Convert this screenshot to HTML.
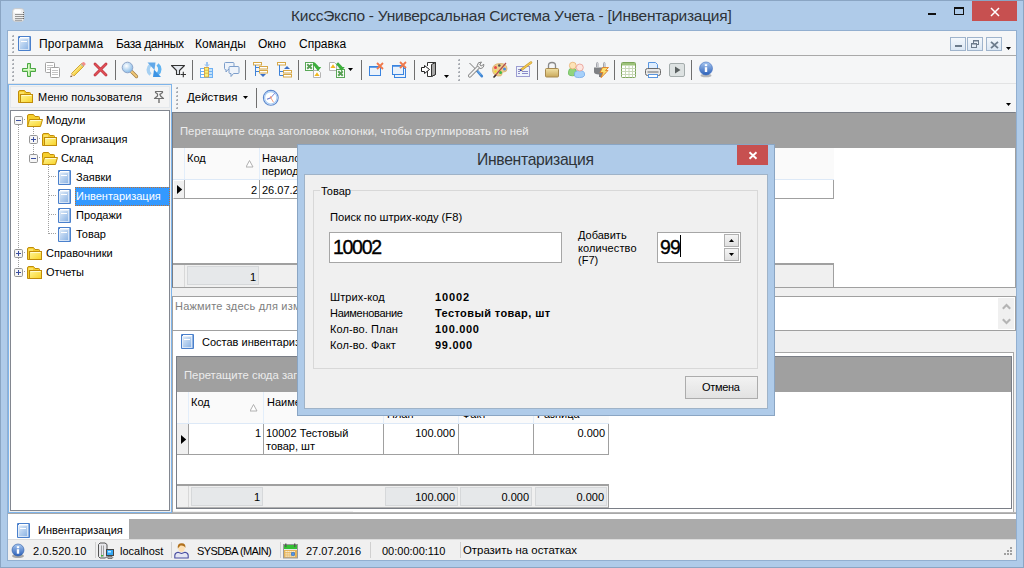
<!DOCTYPE html>
<html><head><meta charset="utf-8">
<style>
*{margin:0;padding:0;box-sizing:border-box}
html,body{width:1024px;height:568px;overflow:hidden;background:#afcbe9;font-family:"Liberation Sans",sans-serif;font-size:11px;color:#000}
.a{position:absolute}
.t{position:absolute;white-space:nowrap;line-height:1}
</style></head><body>
<svg width="0" height="0" style="position:absolute"><defs>
<linearGradient id="gBook" x1="0" y1="0" x2="1" y2="1"><stop offset="0" stop-color="#e3eefa"/><stop offset="1" stop-color="#86b0e3"/></linearGradient>
<linearGradient id="gFold" x1="0" y1="0" x2="1" y2="1"><stop offset="0" stop-color="#fff79a"/><stop offset="1" stop-color="#f8d224"/></linearGradient>
<linearGradient id="gBlueBall" x1="0" y1="0" x2="0" y2="1"><stop offset="0" stop-color="#a9c8f0"/><stop offset="1" stop-color="#2a5fb8"/></linearGradient>
<linearGradient id="gGold" x1="0" y1="0" x2="0" y2="1"><stop offset="0" stop-color="#f1e2a8"/><stop offset="1" stop-color="#c9a85a"/></linearGradient>
<radialGradient id="gMag" cx="0.4" cy="0.35" r="0.7"><stop offset="0" stop-color="#ffffff"/><stop offset="1" stop-color="#7fb6e6"/></radialGradient>
</defs></svg>
<div class="a" style="left:0px;top:0px;width:1024px;height:568px;border:1px solid #8aa5c3"></div>
<svg class="a" style="left:12px;top:8px" width="13" height="14" viewBox="0 0 13 14"><rect x="0.5" y="0.5" width="11.5" height="13" rx="3" fill="#efefef" stroke="#c4c4c4" stroke-width="0.7"/><rect x="2" y="1.5" width="7" height="3.5" rx="1.5" fill="#fff"/><path d="M3 6.5 H11.5 M3 8.5 H11.5 M3 10.5 H11.5 M3 12.3 H10" stroke="#8c8c8c" stroke-width="0.9"/><path d="M11.5 4 V12" stroke="#666" stroke-width="1" stroke-dasharray="1 1"/></svg>
<div class="t" style="left:291px;top:8.28px;font-size:15.5px;letter-spacing:-0.25px;color:#2e3338">КиссЭкспо - Универсальная Система Учета - [Инвентаризация]</div>
<div class="a" style="left:928px;top:13px;width:8px;height:2px;background:#111"></div>
<div class="a" style="left:954px;top:7px;width:10px;height:8px;border:1px solid #111;border-top-width:2px"></div>
<div class="a" style="left:972px;top:1px;width:45px;height:20px;background:#c75050"></div>
<svg class="a" style="left:990px;top:7px" width="10" height="10" viewBox="0 0 10 10"><path d="M1 1 L9 9 M9 1 L1 9" stroke="#fff" stroke-width="1.5"/></svg>
<div class="a" style="left:7px;top:30px;width:1009px;height:26px;background:#f5f6f7;border-bottom:1px solid #a9a9a9"></div>
<svg class="a" style="left:12px;top:35px" width="2" height="20" viewBox="0 0 2 20"><rect x="0" y="0" width="2" height="2" fill="#a9adb3"/><rect x="0" y="0" width="1" height="1" fill="#d4d6da"/><rect x="0" y="4" width="2" height="2" fill="#a9adb3"/><rect x="0" y="4" width="1" height="1" fill="#d4d6da"/><rect x="0" y="8" width="2" height="2" fill="#a9adb3"/><rect x="0" y="8" width="1" height="1" fill="#d4d6da"/><rect x="0" y="12" width="2" height="2" fill="#a9adb3"/><rect x="0" y="12" width="1" height="1" fill="#d4d6da"/><rect x="0" y="16" width="2" height="2" fill="#a9adb3"/><rect x="0" y="16" width="1" height="1" fill="#d4d6da"/></svg>
<svg class="a" style="left:18px;top:36px" width="14" height="16" viewBox="0 0 14 16"><rect x="0" y="0" width="13" height="15" rx="1" fill="#4a80cc"/><rect x="2" y="1" width="9" height="1" fill="#ffffff"/><rect x="1" y="2" width="10" height="12" fill="url(#gBook)"/><rect x="1.5" y="2.5" width="9" height="11" fill="none" stroke="#eef4fb" stroke-opacity="0.7"/><rect x="3" y="5" width="6" height="1" fill="#ffffff"/><rect x="11" y="1" width="1" height="13" fill="#8fb3e2"/></svg>
<div class="t" style="left:39px;top:37.84px;font-size:12px;letter-spacing:0.15px;">Программа</div>
<div class="t" style="left:116px;top:37.84px;font-size:12px;letter-spacing:-0.35px;">База данных</div>
<div class="t" style="left:195px;top:37.84px;font-size:12px;letter-spacing:0px;">Команды</div>
<div class="t" style="left:258px;top:37.84px;font-size:12px;letter-spacing:0px;">Окно</div>
<div class="t" style="left:299px;top:37.84px;font-size:12px;letter-spacing:0px;">Справка</div>
<div class="a" style="left:950px;top:37px;width:16px;height:14px;border:1px solid #9fb4cc;background:linear-gradient(#f4f8fc,#dbe7f4)"></div>
<div class="a" style="left:967px;top:37px;width:16px;height:14px;border:1px solid #9fb4cc;background:linear-gradient(#f4f8fc,#dbe7f4)"></div>
<div class="a" style="left:986px;top:37px;width:16px;height:14px;border:1px solid #9fb4cc;background:linear-gradient(#f4f8fc,#dbe7f4)"></div>
<div class="a" style="left:955px;top:45px;width:7px;height:2px;background:#6c7b8b"></div>
<svg class="a" style="left:971px;top:40px" width="9" height="9" viewBox="0 0 9 9"><rect x="2.5" y="0.5" width="5" height="4" fill="none" stroke="#6c7b8b"/><path d="M3 1 H7" stroke="#6c7b8b"/><rect x="0.5" y="3.5" width="5" height="4" fill="#e6eef7" stroke="#6c7b8b"/><path d="M1 4 H5" stroke="#6c7b8b"/></svg>
<svg class="a" style="left:990px;top:41px" width="9" height="8" viewBox="0 0 9 8"><path d="M1 0.8 L8 7.2 M8 0.8 L1 7.2" stroke="#6c7b8b" stroke-width="1.8"/></svg>
<svg class="a" style="left:1006px;top:47px" width="5" height="4" viewBox="0 0 5 4"><path d="M0 0 L5 0 L2.5 3 Z" fill="#000"/></svg>
<svg class="a" style="left:1006px;top:75px" width="5" height="4" viewBox="0 0 5 4"><path d="M0 0 L5 0 L2.5 3 Z" fill="#000"/></svg>
<div class="a" style="left:7px;top:56px;width:1009px;height:28px;background:#f5f6f7;border-bottom:1px solid #e2e3e4"></div>
<svg class="a" style="left:12px;top:59px" width="2" height="24" viewBox="0 0 2 24"><rect x="0" y="0" width="2" height="2" fill="#a9adb3"/><rect x="0" y="0" width="1" height="1" fill="#d4d6da"/><rect x="0" y="4" width="2" height="2" fill="#a9adb3"/><rect x="0" y="4" width="1" height="1" fill="#d4d6da"/><rect x="0" y="8" width="2" height="2" fill="#a9adb3"/><rect x="0" y="8" width="1" height="1" fill="#d4d6da"/><rect x="0" y="12" width="2" height="2" fill="#a9adb3"/><rect x="0" y="12" width="1" height="1" fill="#d4d6da"/><rect x="0" y="16" width="2" height="2" fill="#a9adb3"/><rect x="0" y="16" width="1" height="1" fill="#d4d6da"/><rect x="0" y="20" width="2" height="2" fill="#a9adb3"/><rect x="0" y="20" width="1" height="1" fill="#d4d6da"/></svg>
<div class="a" style="left:115px;top:60px;width:1px;height:20px;background:#6f6f6f"></div>
<div class="a" style="left:192px;top:60px;width:1px;height:20px;background:#6f6f6f"></div>
<div class="a" style="left:245px;top:60px;width:1px;height:20px;background:#6f6f6f"></div>
<div class="a" style="left:298px;top:60px;width:1px;height:20px;background:#6f6f6f"></div>
<div class="a" style="left:361px;top:60px;width:1px;height:20px;background:#6f6f6f"></div>
<div class="a" style="left:414px;top:60px;width:1px;height:20px;background:#6f6f6f"></div>
<div class="a" style="left:537px;top:60px;width:1px;height:20px;background:#6f6f6f"></div>
<div class="a" style="left:614px;top:60px;width:1px;height:20px;background:#6f6f6f"></div>
<div class="a" style="left:691px;top:60px;width:1px;height:20px;background:#6f6f6f"></div>
<svg class="a" style="left:458px;top:59px" width="2" height="24" viewBox="0 0 2 24"><rect x="0" y="0" width="2" height="2" fill="#a9adb3"/><rect x="0" y="0" width="1" height="1" fill="#d4d6da"/><rect x="0" y="4" width="2" height="2" fill="#a9adb3"/><rect x="0" y="4" width="1" height="1" fill="#d4d6da"/><rect x="0" y="8" width="2" height="2" fill="#a9adb3"/><rect x="0" y="8" width="1" height="1" fill="#d4d6da"/><rect x="0" y="12" width="2" height="2" fill="#a9adb3"/><rect x="0" y="12" width="1" height="1" fill="#d4d6da"/><rect x="0" y="16" width="2" height="2" fill="#a9adb3"/><rect x="0" y="16" width="1" height="1" fill="#d4d6da"/><rect x="0" y="20" width="2" height="2" fill="#a9adb3"/><rect x="0" y="20" width="1" height="1" fill="#d4d6da"/></svg>
<svg class="a" style="left:0;top:0" width="1024" height="568" viewBox="0 0 1024 568">
<!-- plus -->
<path d="M27.5 63.5 H30.5 V68.5 H35.5 V71.5 H30.5 V76.5 H27.5 V71.5 H22.5 V68.5 H27.5 Z" fill="#b4ee9c" stroke="#4aa644" stroke-linejoin="round"/>
<path d="M28.5 65 V75 M24 69.5 H34" stroke="#e4fbd8" stroke-width="0.9" opacity="0.9"/>
<!-- copy -->
<rect x="45.5" y="62.5" width="9" height="10" rx="1" fill="#fff" stroke="#a2a2a2"/>
<path d="M47 65.5 H53 M47 67.5 H53 M47 69.5 H50" stroke="#c4c4c4"/>
<rect x="50.5" y="67.5" width="9" height="10" rx="1" fill="#fff" stroke="#a2a2a2"/>
<path d="M52 70.5 H58 M52 72.5 H58 M52 74.5 H58" stroke="#c4c4c4"/>
<!-- pencil -->
<path d="M71.5 73.5 L81.5 63.5 L84 66 L74 76 Z" fill="#f6d650" stroke="#c8981c" stroke-width="0.8" stroke-linejoin="round"/>
<path d="M72.5 74 L82.2 64.3" stroke="#fff3b0" stroke-width="0.8"/>
<path d="M80.8 64.2 L83.3 66.7" stroke="#b8b8b8" stroke-width="1.2"/>
<path d="M81.5 63.5 L82.8 62.2 Q83.5 61.6 84.2 62.2 L85.3 63.3 Q85.9 64 85.3 64.7 L84 66 Z" fill="#f28c8c"/>
<path d="M70.3 77.2 L71.5 73.5 L74 76 Z" fill="#f2c8a0"/>
<path d="M70.3 77.2 L70.9 75.4 L72.1 76.6 Z" fill="#333"/>
<!-- red X -->
<path d="M95 64 L106 75 M106 64 L95 75" stroke="#b8303a" stroke-width="2.8" stroke-linecap="round"/>
<path d="M95 64 L106 75 M106 64 L95 75" stroke="#e25058" stroke-width="1.6" stroke-linecap="round"/>
<!-- magnifier -->
<path d="M131.5 71.5 L136.5 76.5" stroke="#a07a40" stroke-width="3.2" stroke-linecap="round"/>
<path d="M131.5 71.5 L136.5 76.5" stroke="#f0c878" stroke-width="1.8" stroke-linecap="round"/>
<circle cx="127.5" cy="67.5" r="5.3" fill="url(#gMag)" stroke="#8ea4c8" stroke-width="1"/>
<!-- refresh -->
<path d="M150.5 74.5 A6 6 0 0 1 150.5 65" fill="none" stroke="#a6d0f2" stroke-width="3.4"/>
<path d="M147.5 62.5 L155.5 62.5 L154.5 70 Z" fill="#62a8e8"/>
<path d="M157.5 64.5 A6 6 0 0 1 157.5 74" fill="none" stroke="#62b4f2" stroke-width="3.4"/>
<path d="M161 77 L153 77 L154 69.5 Z" fill="#3d94e4"/>
<!-- filter -->
<path d="M171.5 65.5 H184.5 L179.5 70.5 V74.5 H176.5 V70.5 Z" fill="#e4e8ee" stroke="#333" stroke-width="1.1" stroke-linejoin="round"/>
<path d="M180.5 74.5 H186 M183.3 71.8 V77.2" stroke="#333" stroke-width="1.1"/>
<!-- column chooser -->
<rect x="200.5" y="68.5" width="12" height="9" fill="#fff" stroke="#6eb0f4"/>
<path d="M200.5 71.5 H212.5 M200.5 74.5 H212.5" stroke="#6eb0f4"/>
<rect x="209" y="69" width="3" height="8" fill="#c4e2f8"/>
<path d="M209 71.5 H212 M209 74.5 H212" stroke="#6eb0f4"/>
<rect x="204.5" y="67.5" width="4" height="9.5" fill="#f8f478" stroke="#d8a848"/>
<path d="M205 70.3 H208 M205 73.2 H208" stroke="#d8a848" stroke-width="0.8"/>
<path d="M204 64.5 L210 64.5 L207 67 Z" fill="#9cc4f0"/>
<rect x="206" y="62" width="2" height="3" fill="#9cc4f0"/>
<!-- chat -->
<path d="M224.5 63.5 Q224.5 62.5 225.5 62.5 H233 Q234 62.5 234 63.5 V68.5 Q234 69.5 233 69.5 H228 L226 72 V69.5 H225.5 Q224.5 69.5 224.5 68.5 Z" fill="#eef3fa" stroke="#7c9ecb"/>
<path d="M229 67.5 Q229 66.5 230 66.5 H238 Q239 66.5 239 67.5 V72.5 Q239 73.5 238 73.5 H233.5 L231 76.5 V73.5 H230 Q229 73.5 229 72.5 Z" fill="#eef3fa" stroke="#7c9ecb"/>
<!-- expand tree -->
<rect x="253.5" y="62.5" width="8" height="2.5" fill="#fff" stroke="#d6a848"/>
<path d="M255.5 65 V76 M255.5 67.5 H259 M255.5 71.5 H259" stroke="#3f82d8" stroke-width="1"/>
<rect x="259.5" y="66.5" width="8" height="2.5" fill="#fff" stroke="#d6a848"/>
<rect x="259.5" y="70.5" width="8" height="2.5" fill="#fff" stroke="#d6a848"/>
<path d="M260 74 H266 L263 77 Z" fill="#3a70c8"/>
<!-- collapse tree -->
<rect x="277.5" y="62.5" width="8" height="2.5" fill="#fff" stroke="#d6a848"/>
<path d="M279.5 65 V75.5 M279.5 71.5 H283 M279.5 75.5 H283" stroke="#3f82d8" stroke-width="1"/>
<path d="M284 69 H290 L287 66 Z" fill="#3a70c8"/>
<rect x="283.5" y="70.5" width="8" height="2.5" fill="#fff" stroke="#d6a848"/>
<rect x="283.5" y="74.5" width="8" height="2.5" fill="#fff" stroke="#d6a848"/>
<!-- excel export -->
<rect x="305.5" y="62.5" width="8" height="8" fill="#fff" stroke="#5aa858"/>
<path d="M307.2 64.2 L311.8 68.8 M311.8 64.2 L307.2 68.8" stroke="#58a055" stroke-width="2"/>
<path d="M313.5 70.5 H318.5 L320.5 72.5 V77.5 H313.5 Z" fill="#fff" stroke="#b4b4b4"/>
<path d="M317 72.2 L319.6 76 H314.4 Z" fill="#f2b820"/>
<path d="M313.5 63.2 L317.8 67.8" stroke="#3cae3c" stroke-width="3"/>
<path d="M315 67 H321.2 L318 71.3 Z" fill="#3cae3c"/>
<!-- excel import -->
<path d="M329.5 62.5 H334.5 L336.5 64.5 V70.5 H329.5 Z" fill="#fff" stroke="#b4b4b4"/>
<path d="M333 64.2 L335.6 68 H330.4 Z" fill="#f2b820"/>
<rect x="336.5" y="69.5" width="8" height="8" fill="#fff" stroke="#5aa858"/>
<path d="M338.2 71.2 L342.8 75.8 M342.8 71.2 L338.2 75.8" stroke="#58a055" stroke-width="2"/>
<path d="M337 63.2 L341.3 67.8" stroke="#3cae3c" stroke-width="3"/>
<path d="M338.5 67 H344.7 L341.5 71.3 Z" fill="#3cae3c"/>
<path d="M348 68 H353 L350.5 71 Z" fill="#000"/>
<!-- window close -->
<rect x="369.5" y="66.5" width="11" height="9" fill="#eaf2fb" stroke="#3a84e0"/>
<path d="M370 67 H380" stroke="#3a84e0" stroke-width="1.5"/>
<path d="M377 63 L383 69 M383 63 L377 69" stroke="#f0784a" stroke-width="1.8"/>
<!-- close all -->
<rect x="394.5" y="68.5" width="11" height="9" fill="#eaf2fb" stroke="#3a84e0"/>
<rect x="392.5" y="65.5" width="11" height="9" fill="#eaf2fb" stroke="#3a84e0"/>
<path d="M393 66 H403" stroke="#3a84e0" stroke-width="1.5"/>
<path d="M400 62 L406 68 M406 62 L400 68" stroke="#f0784a" stroke-width="1.8"/>
<!-- exit -->
<path d="M427.5 62.5 H435.5 V74.5 L431.5 76.5 H427.5 V71 M427.5 66 V62.5" fill="#fff" stroke="#333"/>
<path d="M431.5 64.5 L435.5 62.5 V74.5 L431.5 76.5 Z" fill="#a8a8a8" stroke="#333"/>
<path d="M421.5 67.5 H424.5 V65.5 L429.5 69.5 L424.5 73.5 V71.5 H421.5 Z" fill="#fff" stroke="#222" stroke-linejoin="round"/>
<path d="M444 75 H449 L446.5 78 Z" fill="#000"/>
<!-- tools -->
<path d="M469.5 63 L475.5 69" stroke="#777" stroke-width="1"/>
<path d="M476 69.5 L481.8 76.2" stroke="#3f86d4" stroke-width="2.6" stroke-linecap="round"/>
<path d="M476.5 69.5 L481 74.8" stroke="#7ab8f0" stroke-width="0.9"/>
<path d="M469.8 75.8 L479.5 66" stroke="#7a7a7a" stroke-width="3.6" stroke-linecap="round"/>
<path d="M469.8 75.8 L479.5 66" stroke="#f2f2f2" stroke-width="2" stroke-linecap="round"/>
<path d="M477.2 65.5 Q477.5 61.8 481.5 62 L479.8 64.6 L481.2 66 L483.8 64.3 Q484.2 68.2 480.2 68.6 Z" fill="#f0f0f0" stroke="#7a7a7a" stroke-width="0.9" stroke-linejoin="round"/>
<!-- palette -->
<path d="M499.5 63.5 Q507 63 507 69 Q507 72 503.5 72 Q501.5 72 502 74 Q502 76.5 498 76 Q492.5 75 492.5 69.5 Q492.5 64 499.5 63.5 Z" fill="#efcf8c" stroke="#d8b070" stroke-width="0.8"/>
<circle cx="495.5" cy="67.5" r="1.5" fill="#e84848"/>
<circle cx="499.3" cy="65.5" r="1.3" fill="#555"/>
<circle cx="504.5" cy="69" r="1.5" fill="#4a8ae0"/>
<circle cx="500.5" cy="72.5" r="1.5" fill="#3cbc48"/>
<circle cx="495.5" cy="71.5" r="1.2" fill="#f0e030"/>
<path d="M494 77 L506 63" stroke="#b05050" stroke-width="1.2"/>
<path d="M493.5 77.5 L496 75" stroke="#333" stroke-width="1.5"/>
<!-- form edit -->
<rect x="516.5" y="66.5" width="13" height="10" fill="#eef4fc" stroke="#9d9dd2"/>
<path d="M518 69.5 H520 M518 71.5 H520 M522 71.5 H528 M518 73.5 H520 M522 73.5 H528" stroke="#8a8ac8"/>
<path d="M521 70 L531 62.5" stroke="#c89a30" stroke-width="2.6" stroke-linecap="round"/>
<path d="M521 70 L531 62.5" stroke="#f2c850" stroke-width="1.4" stroke-linecap="round"/>
<circle cx="520.8" cy="70.2" r="0.9" fill="#2233cc"/>
<!-- lock -->
<path d="M548.5 68.5 V65.5 Q548.5 62.5 552 62.5 Q555.5 62.5 555.5 65.5 V68.5" fill="none" stroke="#8a8a8a" stroke-width="1.3"/>
<rect x="545.5" y="68.5" width="13" height="8.5" rx="1" fill="url(#gGold)" stroke="#a88a50"/>
<!-- users -->
<path d="M568.5 72 Q568.5 68 572.5 68 Q576.5 68 576.5 72 V74 Q576 75.8 572.5 75.8 Q568.5 75.8 568.5 74 Z" fill="#92d47c" stroke="#6cbc5c" stroke-width="0.8"/>
<circle cx="572.8" cy="65.6" r="3.4" fill="#fde4b8" stroke="#e8b070" stroke-width="0.8"/>
<path d="M574.5 74 Q574.5 70.5 579.5 70.5 Q584.5 70.5 584.5 74 V75.5 Q584 77.6 579.5 77.6 Q574.5 77.6 574.5 75.5 Z" fill="#a6d0fa" stroke="#72a8e8" stroke-width="0.8"/>
<circle cx="579.8" cy="67.5" r="3.5" fill="#fde6e0" stroke="#e89a90" stroke-width="0.8"/>
<!-- plug -->
<path d="M596.5 67 V63.5 Q596.5 62.5 597.3 62.5 Q598 62.5 598 63.5 V67 M603.5 67 V63.5 Q603.5 62.5 604.3 62.5 Q605 62.5 605 63.5 V67" fill="none" stroke="#9a9ca4" stroke-width="0.9"/>
<path d="M594 67.5 H606 V72 Q606 74 602 74.5 V77 H599 V74.5 Q594 74 594 72 Z" fill="#7e8084"/>
<path d="M602.5 67.5 H608.5 L605.5 70.5 H608 L601 77.8 L603 72.5 H600 Z" fill="#fae070" stroke="#e08028" stroke-width="0.9" stroke-linejoin="round"/>
<!-- table -->
<rect x="621.5" y="62.5" width="14" height="15" rx="1" fill="#fff" stroke="#7ca45a"/>
<rect x="622" y="63" width="13" height="2.5" fill="#9cc27a"/>
<path d="M621.5 68.5 H635.5 M621.5 71.5 H635.5 M621.5 74.5 H635.5 M625.5 65.5 V77.5 M629 65.5 V77.5 M632.5 65.5 V77.5" stroke="#c8d8b8" stroke-width="1"/>
<!-- printer -->
<path d="M648.5 62.5 H655.5 L657.5 64.5 V69 H648.5 Z" fill="#dfeeff" stroke="#5a96e0"/>
<rect x="645.5" y="68.5" width="15" height="7" rx="2" fill="#e8e8e8" stroke="#6a6a6a"/>
<rect x="647.5" y="71" width="11" height="2" fill="#aaa"/>
<rect x="648.5" y="74.5" width="9" height="3" fill="#fff" stroke="#5a96e0"/>
<!-- play -->
<rect x="669.5" y="63.5" width="15" height="13" rx="1.5" fill="#dde2e2" stroke="#a4acac"/>
<path d="M675 66.5 L680.5 70 L675 73.5 Z" fill="#5a6060"/>
<!-- info -->
<ellipse cx="706" cy="75.5" rx="5.5" ry="1.8" fill="#000" opacity="0.25"/>
<circle cx="706" cy="68.5" r="6.5" fill="url(#gBlueBall)" stroke="#3a6cc0" stroke-width="0.6"/>
<rect x="704.8" y="64.2" width="2.4" height="2" fill="#fff"/>
<rect x="704.8" y="67.2" width="2.4" height="4.8" fill="#fff"/>
</svg>
<div class="a" style="left:8px;top:84px;width:164px;height:429px;background:#f0f0f0;border:1px solid #7eb4ea"></div>
<div class="a" style="left:10px;top:86px;width:160px;height:22px;background:#f4f4f4;border:1px solid #e4e8ec"></div>
<svg class="a" style="left:18px;top:90px" width="16" height="14" viewBox="0 0 16 14"><path d="M0.5 12.5 V2 Q0.5 0.5 2 0.5 H6.5 L8 2.5 H11.5 Q12.5 2.5 12.5 3.5 V12.5 Z" fill="#f6cf2e" stroke="#c08c0a"/><path d="M1.5 3 H6" stroke="#fff2a0" stroke-width="1"/><rect x="2.5" y="4.5" width="12" height="8" fill="url(#gFold)" stroke="#c08c0a"/><path d="M3.5 5.5 H13.5" stroke="#fffbd0" stroke-width="1"/></svg>
<div class="t" style="left:38px;top:91.69px;font-size:11px;letter-spacing:0.1px;">Меню пользователя</div>
<svg class="a" style="left:153px;top:90px" width="12" height="14" viewBox="0 0 12 14"><path d="M2.5 1.5 H9.5 V2.5 L7.5 4 V6 L10.5 8.5 H1.5 L4.5 6 V4 L2.5 2.5 Z" fill="#f4f4f4" stroke="#707070" stroke-width="1.2" stroke-linejoin="round"/><path d="M6 9 V13" stroke="#707070" stroke-width="1.4"/><circle cx="7" cy="4.5" r="0.9" fill="#888"/></svg>
<div class="a" style="left:10px;top:110px;width:160px;height:401px;background:#fff;border:1px solid #828790"></div>
<svg class="a" style="left:18px;top:125px" width="1" height="124" viewBox="0 0 1 124"><rect x="0" y="0" width="1" height="1" fill="#a0a0a0"/><rect x="0" y="2" width="1" height="1" fill="#a0a0a0"/><rect x="0" y="4" width="1" height="1" fill="#a0a0a0"/><rect x="0" y="6" width="1" height="1" fill="#a0a0a0"/><rect x="0" y="8" width="1" height="1" fill="#a0a0a0"/><rect x="0" y="10" width="1" height="1" fill="#a0a0a0"/><rect x="0" y="12" width="1" height="1" fill="#a0a0a0"/><rect x="0" y="14" width="1" height="1" fill="#a0a0a0"/><rect x="0" y="16" width="1" height="1" fill="#a0a0a0"/><rect x="0" y="18" width="1" height="1" fill="#a0a0a0"/><rect x="0" y="20" width="1" height="1" fill="#a0a0a0"/><rect x="0" y="22" width="1" height="1" fill="#a0a0a0"/><rect x="0" y="24" width="1" height="1" fill="#a0a0a0"/><rect x="0" y="26" width="1" height="1" fill="#a0a0a0"/><rect x="0" y="28" width="1" height="1" fill="#a0a0a0"/><rect x="0" y="30" width="1" height="1" fill="#a0a0a0"/><rect x="0" y="32" width="1" height="1" fill="#a0a0a0"/><rect x="0" y="34" width="1" height="1" fill="#a0a0a0"/><rect x="0" y="36" width="1" height="1" fill="#a0a0a0"/><rect x="0" y="38" width="1" height="1" fill="#a0a0a0"/><rect x="0" y="40" width="1" height="1" fill="#a0a0a0"/><rect x="0" y="42" width="1" height="1" fill="#a0a0a0"/><rect x="0" y="44" width="1" height="1" fill="#a0a0a0"/><rect x="0" y="46" width="1" height="1" fill="#a0a0a0"/><rect x="0" y="48" width="1" height="1" fill="#a0a0a0"/><rect x="0" y="50" width="1" height="1" fill="#a0a0a0"/><rect x="0" y="52" width="1" height="1" fill="#a0a0a0"/><rect x="0" y="54" width="1" height="1" fill="#a0a0a0"/><rect x="0" y="56" width="1" height="1" fill="#a0a0a0"/><rect x="0" y="58" width="1" height="1" fill="#a0a0a0"/><rect x="0" y="60" width="1" height="1" fill="#a0a0a0"/><rect x="0" y="62" width="1" height="1" fill="#a0a0a0"/><rect x="0" y="64" width="1" height="1" fill="#a0a0a0"/><rect x="0" y="66" width="1" height="1" fill="#a0a0a0"/><rect x="0" y="68" width="1" height="1" fill="#a0a0a0"/><rect x="0" y="70" width="1" height="1" fill="#a0a0a0"/><rect x="0" y="72" width="1" height="1" fill="#a0a0a0"/><rect x="0" y="74" width="1" height="1" fill="#a0a0a0"/><rect x="0" y="76" width="1" height="1" fill="#a0a0a0"/><rect x="0" y="78" width="1" height="1" fill="#a0a0a0"/><rect x="0" y="80" width="1" height="1" fill="#a0a0a0"/><rect x="0" y="82" width="1" height="1" fill="#a0a0a0"/><rect x="0" y="84" width="1" height="1" fill="#a0a0a0"/><rect x="0" y="86" width="1" height="1" fill="#a0a0a0"/><rect x="0" y="88" width="1" height="1" fill="#a0a0a0"/><rect x="0" y="90" width="1" height="1" fill="#a0a0a0"/><rect x="0" y="92" width="1" height="1" fill="#a0a0a0"/><rect x="0" y="94" width="1" height="1" fill="#a0a0a0"/><rect x="0" y="96" width="1" height="1" fill="#a0a0a0"/><rect x="0" y="98" width="1" height="1" fill="#a0a0a0"/><rect x="0" y="100" width="1" height="1" fill="#a0a0a0"/><rect x="0" y="102" width="1" height="1" fill="#a0a0a0"/><rect x="0" y="104" width="1" height="1" fill="#a0a0a0"/><rect x="0" y="106" width="1" height="1" fill="#a0a0a0"/><rect x="0" y="108" width="1" height="1" fill="#a0a0a0"/><rect x="0" y="110" width="1" height="1" fill="#a0a0a0"/><rect x="0" y="112" width="1" height="1" fill="#a0a0a0"/><rect x="0" y="114" width="1" height="1" fill="#a0a0a0"/><rect x="0" y="116" width="1" height="1" fill="#a0a0a0"/><rect x="0" y="118" width="1" height="1" fill="#a0a0a0"/><rect x="0" y="120" width="1" height="1" fill="#a0a0a0"/><rect x="0" y="122" width="1" height="1" fill="#a0a0a0"/></svg>
<svg class="a" style="left:24px;top:119px" width="1" height="1" viewBox="0 0 1 1"><rect x="0" y="0" width="1" height="1" fill="#a0a0a0"/></svg>
<svg class="a" style="left:33px;top:125px" width="1" height="34" viewBox="0 0 1 34"><rect x="0" y="0" width="1" height="1" fill="#a0a0a0"/><rect x="0" y="2" width="1" height="1" fill="#a0a0a0"/><rect x="0" y="4" width="1" height="1" fill="#a0a0a0"/><rect x="0" y="6" width="1" height="1" fill="#a0a0a0"/><rect x="0" y="8" width="1" height="1" fill="#a0a0a0"/><rect x="0" y="10" width="1" height="1" fill="#a0a0a0"/><rect x="0" y="12" width="1" height="1" fill="#a0a0a0"/><rect x="0" y="14" width="1" height="1" fill="#a0a0a0"/><rect x="0" y="16" width="1" height="1" fill="#a0a0a0"/><rect x="0" y="18" width="1" height="1" fill="#a0a0a0"/><rect x="0" y="20" width="1" height="1" fill="#a0a0a0"/><rect x="0" y="22" width="1" height="1" fill="#a0a0a0"/><rect x="0" y="24" width="1" height="1" fill="#a0a0a0"/><rect x="0" y="26" width="1" height="1" fill="#a0a0a0"/><rect x="0" y="28" width="1" height="1" fill="#a0a0a0"/><rect x="0" y="30" width="1" height="1" fill="#a0a0a0"/><rect x="0" y="32" width="1" height="1" fill="#a0a0a0"/></svg>
<svg class="a" style="left:39px;top:138px" width="1" height="1" viewBox="0 0 1 1"><rect x="0" y="0" width="1" height="1" fill="#a0a0a0"/></svg>
<svg class="a" style="left:39px;top:157px" width="1" height="1" viewBox="0 0 1 1"><rect x="0" y="0" width="1" height="1" fill="#a0a0a0"/></svg>
<svg class="a" style="left:48px;top:163px" width="1" height="72" viewBox="0 0 1 72"><rect x="0" y="0" width="1" height="1" fill="#a0a0a0"/><rect x="0" y="2" width="1" height="1" fill="#a0a0a0"/><rect x="0" y="4" width="1" height="1" fill="#a0a0a0"/><rect x="0" y="6" width="1" height="1" fill="#a0a0a0"/><rect x="0" y="8" width="1" height="1" fill="#a0a0a0"/><rect x="0" y="10" width="1" height="1" fill="#a0a0a0"/><rect x="0" y="12" width="1" height="1" fill="#a0a0a0"/><rect x="0" y="14" width="1" height="1" fill="#a0a0a0"/><rect x="0" y="16" width="1" height="1" fill="#a0a0a0"/><rect x="0" y="18" width="1" height="1" fill="#a0a0a0"/><rect x="0" y="20" width="1" height="1" fill="#a0a0a0"/><rect x="0" y="22" width="1" height="1" fill="#a0a0a0"/><rect x="0" y="24" width="1" height="1" fill="#a0a0a0"/><rect x="0" y="26" width="1" height="1" fill="#a0a0a0"/><rect x="0" y="28" width="1" height="1" fill="#a0a0a0"/><rect x="0" y="30" width="1" height="1" fill="#a0a0a0"/><rect x="0" y="32" width="1" height="1" fill="#a0a0a0"/><rect x="0" y="34" width="1" height="1" fill="#a0a0a0"/><rect x="0" y="36" width="1" height="1" fill="#a0a0a0"/><rect x="0" y="38" width="1" height="1" fill="#a0a0a0"/><rect x="0" y="40" width="1" height="1" fill="#a0a0a0"/><rect x="0" y="42" width="1" height="1" fill="#a0a0a0"/><rect x="0" y="44" width="1" height="1" fill="#a0a0a0"/><rect x="0" y="46" width="1" height="1" fill="#a0a0a0"/><rect x="0" y="48" width="1" height="1" fill="#a0a0a0"/><rect x="0" y="50" width="1" height="1" fill="#a0a0a0"/><rect x="0" y="52" width="1" height="1" fill="#a0a0a0"/><rect x="0" y="54" width="1" height="1" fill="#a0a0a0"/><rect x="0" y="56" width="1" height="1" fill="#a0a0a0"/><rect x="0" y="58" width="1" height="1" fill="#a0a0a0"/><rect x="0" y="60" width="1" height="1" fill="#a0a0a0"/><rect x="0" y="62" width="1" height="1" fill="#a0a0a0"/><rect x="0" y="64" width="1" height="1" fill="#a0a0a0"/><rect x="0" y="66" width="1" height="1" fill="#a0a0a0"/><rect x="0" y="68" width="1" height="1" fill="#a0a0a0"/><rect x="0" y="70" width="1" height="1" fill="#a0a0a0"/></svg>
<svg class="a" style="left:49px;top:176px" width="8" height="1" viewBox="0 0 8 1"><rect x="0" y="0" width="1" height="1" fill="#a0a0a0"/><rect x="2" y="0" width="1" height="1" fill="#a0a0a0"/><rect x="4" y="0" width="1" height="1" fill="#a0a0a0"/><rect x="6" y="0" width="1" height="1" fill="#a0a0a0"/></svg>
<svg class="a" style="left:49px;top:195px" width="8" height="1" viewBox="0 0 8 1"><rect x="0" y="0" width="1" height="1" fill="#a0a0a0"/><rect x="2" y="0" width="1" height="1" fill="#a0a0a0"/><rect x="4" y="0" width="1" height="1" fill="#a0a0a0"/><rect x="6" y="0" width="1" height="1" fill="#a0a0a0"/></svg>
<svg class="a" style="left:49px;top:214px" width="8" height="1" viewBox="0 0 8 1"><rect x="0" y="0" width="1" height="1" fill="#a0a0a0"/><rect x="2" y="0" width="1" height="1" fill="#a0a0a0"/><rect x="4" y="0" width="1" height="1" fill="#a0a0a0"/><rect x="6" y="0" width="1" height="1" fill="#a0a0a0"/></svg>
<svg class="a" style="left:49px;top:233px" width="8" height="1" viewBox="0 0 8 1"><rect x="0" y="0" width="1" height="1" fill="#a0a0a0"/><rect x="2" y="0" width="1" height="1" fill="#a0a0a0"/><rect x="4" y="0" width="1" height="1" fill="#a0a0a0"/><rect x="6" y="0" width="1" height="1" fill="#a0a0a0"/></svg>
<svg class="a" style="left:24px;top:252px" width="1" height="1" viewBox="0 0 1 1"><rect x="0" y="0" width="1" height="1" fill="#a0a0a0"/></svg>
<svg class="a" style="left:24px;top:271px" width="1" height="1" viewBox="0 0 1 1"><rect x="0" y="0" width="1" height="1" fill="#a0a0a0"/></svg>
<svg class="a" style="left:18px;top:258px" width="1" height="10" viewBox="0 0 1 10"><rect x="0" y="0" width="1" height="1" fill="#a0a0a0"/><rect x="0" y="2" width="1" height="1" fill="#a0a0a0"/><rect x="0" y="4" width="1" height="1" fill="#a0a0a0"/><rect x="0" y="6" width="1" height="1" fill="#a0a0a0"/><rect x="0" y="8" width="1" height="1" fill="#a0a0a0"/></svg>
<svg class="a" style="left:14px;top:116px" width="9" height="9" viewBox="0 0 9 9"><rect x="0.5" y="0.5" width="8" height="8" rx="1.2" fill="#f6f6f6" stroke="#969696"/><line x1="2" y1="4.5" x2="7" y2="4.5" stroke="#3b4fa0"/></svg>
<svg class="a" style="left:27px;top:114px" width="17" height="14" viewBox="0 0 17 14"><path d="M0.5 12.5 V2 Q0.5 0.5 2 0.5 H6.5 L8 2.5 H11.5 Q12.5 2.5 12.5 3.5 V5.5" fill="#f6cf2e" stroke="#c08c0a"/><path d="M0.5 5.5 H12.5 V12.5 H0.5 Z" fill="#f6cf2e"/><path d="M0.5 12.5 L2.5 5.5 H15.5 L13.5 12.5 Z" fill="url(#gFold)" stroke="#c08c0a" stroke-linejoin="round"/><path d="M3.2 6.5 H14.2" stroke="#fffbd0" stroke-width="1"/></svg>
<div class="t" style="left:46px;top:114.69px;font-size:11px;">Модули</div>
<svg class="a" style="left:29px;top:135px" width="9" height="9" viewBox="0 0 9 9"><rect x="0.5" y="0.5" width="8" height="8" rx="1.2" fill="#f6f6f6" stroke="#969696"/><line x1="2" y1="4.5" x2="7" y2="4.5" stroke="#3b4fa0"/><line x1="4.5" y1="2" x2="4.5" y2="7" stroke="#3b4fa0"/></svg>
<svg class="a" style="left:42px;top:133px" width="16" height="14" viewBox="0 0 16 14"><path d="M0.5 12.5 V2 Q0.5 0.5 2 0.5 H6.5 L8 2.5 H11.5 Q12.5 2.5 12.5 3.5 V12.5 Z" fill="#f6cf2e" stroke="#c08c0a"/><path d="M1.5 3 H6" stroke="#fff2a0" stroke-width="1"/><rect x="2.5" y="4.5" width="12" height="8" fill="url(#gFold)" stroke="#c08c0a"/><path d="M3.5 5.5 H13.5" stroke="#fffbd0" stroke-width="1"/></svg>
<div class="t" style="left:61px;top:133.69px;font-size:11px;">Организация</div>
<svg class="a" style="left:29px;top:154px" width="9" height="9" viewBox="0 0 9 9"><rect x="0.5" y="0.5" width="8" height="8" rx="1.2" fill="#f6f6f6" stroke="#969696"/><line x1="2" y1="4.5" x2="7" y2="4.5" stroke="#3b4fa0"/></svg>
<svg class="a" style="left:42px;top:152px" width="17" height="14" viewBox="0 0 17 14"><path d="M0.5 12.5 V2 Q0.5 0.5 2 0.5 H6.5 L8 2.5 H11.5 Q12.5 2.5 12.5 3.5 V5.5" fill="#f6cf2e" stroke="#c08c0a"/><path d="M0.5 5.5 H12.5 V12.5 H0.5 Z" fill="#f6cf2e"/><path d="M0.5 12.5 L2.5 5.5 H15.5 L13.5 12.5 Z" fill="url(#gFold)" stroke="#c08c0a" stroke-linejoin="round"/><path d="M3.2 6.5 H14.2" stroke="#fffbd0" stroke-width="1"/></svg>
<div class="t" style="left:61px;top:152.69px;font-size:11px;">Склад</div>
<svg class="a" style="left:58px;top:170px" width="14" height="16" viewBox="0 0 14 16"><rect x="0" y="0" width="13" height="15" rx="1" fill="#4a80cc"/><rect x="2" y="1" width="9" height="1" fill="#ffffff"/><rect x="1" y="2" width="10" height="12" fill="url(#gBook)"/><rect x="1.5" y="2.5" width="9" height="11" fill="none" stroke="#eef4fb" stroke-opacity="0.7"/><rect x="3" y="5" width="6" height="1" fill="#ffffff"/><rect x="11" y="1" width="1" height="13" fill="#8fb3e2"/></svg>
<div class="t" style="left:76px;top:171.69px;font-size:11px;">Заявки</div>
<svg class="a" style="left:58px;top:189px" width="14" height="16" viewBox="0 0 14 16"><rect x="0" y="0" width="13" height="15" rx="1" fill="#4a80cc"/><rect x="2" y="1" width="9" height="1" fill="#ffffff"/><rect x="1" y="2" width="10" height="12" fill="url(#gBook)"/><rect x="1.5" y="2.5" width="9" height="11" fill="none" stroke="#eef4fb" stroke-opacity="0.7"/><rect x="3" y="5" width="6" height="1" fill="#ffffff"/><rect x="11" y="1" width="1" height="13" fill="#8fb3e2"/></svg>
<div class="a" style="left:75px;top:187px;width:95px;height:19px;background:#3399ff;border:1px dotted #c07030"></div>
<div class="t" style="left:76px;top:190.69px;font-size:11px;color:#fff">Инвентаризация</div>
<svg class="a" style="left:58px;top:208px" width="14" height="16" viewBox="0 0 14 16"><rect x="0" y="0" width="13" height="15" rx="1" fill="#4a80cc"/><rect x="2" y="1" width="9" height="1" fill="#ffffff"/><rect x="1" y="2" width="10" height="12" fill="url(#gBook)"/><rect x="1.5" y="2.5" width="9" height="11" fill="none" stroke="#eef4fb" stroke-opacity="0.7"/><rect x="3" y="5" width="6" height="1" fill="#ffffff"/><rect x="11" y="1" width="1" height="13" fill="#8fb3e2"/></svg>
<div class="t" style="left:76px;top:209.69px;font-size:11px;">Продажи</div>
<svg class="a" style="left:58px;top:227px" width="14" height="16" viewBox="0 0 14 16"><rect x="0" y="0" width="13" height="15" rx="1" fill="#4a80cc"/><rect x="2" y="1" width="9" height="1" fill="#ffffff"/><rect x="1" y="2" width="10" height="12" fill="url(#gBook)"/><rect x="1.5" y="2.5" width="9" height="11" fill="none" stroke="#eef4fb" stroke-opacity="0.7"/><rect x="3" y="5" width="6" height="1" fill="#ffffff"/><rect x="11" y="1" width="1" height="13" fill="#8fb3e2"/></svg>
<div class="t" style="left:76px;top:228.69px;font-size:11px;">Товар</div>
<svg class="a" style="left:14px;top:249px" width="9" height="9" viewBox="0 0 9 9"><rect x="0.5" y="0.5" width="8" height="8" rx="1.2" fill="#f6f6f6" stroke="#969696"/><line x1="2" y1="4.5" x2="7" y2="4.5" stroke="#3b4fa0"/><line x1="4.5" y1="2" x2="4.5" y2="7" stroke="#3b4fa0"/></svg>
<svg class="a" style="left:27px;top:247px" width="16" height="14" viewBox="0 0 16 14"><path d="M0.5 12.5 V2 Q0.5 0.5 2 0.5 H6.5 L8 2.5 H11.5 Q12.5 2.5 12.5 3.5 V12.5 Z" fill="#f6cf2e" stroke="#c08c0a"/><path d="M1.5 3 H6" stroke="#fff2a0" stroke-width="1"/><rect x="2.5" y="4.5" width="12" height="8" fill="url(#gFold)" stroke="#c08c0a"/><path d="M3.5 5.5 H13.5" stroke="#fffbd0" stroke-width="1"/></svg>
<div class="t" style="left:46px;top:247.69px;font-size:11px;">Справочники</div>
<svg class="a" style="left:14px;top:268px" width="9" height="9" viewBox="0 0 9 9"><rect x="0.5" y="0.5" width="8" height="8" rx="1.2" fill="#f6f6f6" stroke="#969696"/><line x1="2" y1="4.5" x2="7" y2="4.5" stroke="#3b4fa0"/><line x1="4.5" y1="2" x2="4.5" y2="7" stroke="#3b4fa0"/></svg>
<svg class="a" style="left:27px;top:266px" width="16" height="14" viewBox="0 0 16 14"><path d="M0.5 12.5 V2 Q0.5 0.5 2 0.5 H6.5 L8 2.5 H11.5 Q12.5 2.5 12.5 3.5 V12.5 Z" fill="#f6cf2e" stroke="#c08c0a"/><path d="M1.5 3 H6" stroke="#fff2a0" stroke-width="1"/><rect x="2.5" y="4.5" width="12" height="8" fill="url(#gFold)" stroke="#c08c0a"/><path d="M3.5 5.5 H13.5" stroke="#fffbd0" stroke-width="1"/></svg>
<div class="t" style="left:46px;top:266.69px;font-size:11px;">Отчеты</div>
<div class="a" style="left:172px;top:84px;width:844px;height:429px;background:#f0f0f0"></div>
<div class="a" style="left:172px;top:84px;width:844px;height:28px;background:#f5f6f7"></div>
<svg class="a" style="left:176px;top:87px" width="2" height="24" viewBox="0 0 2 24"><rect x="0" y="0" width="2" height="2" fill="#a9adb3"/><rect x="0" y="0" width="1" height="1" fill="#d4d6da"/><rect x="0" y="4" width="2" height="2" fill="#a9adb3"/><rect x="0" y="4" width="1" height="1" fill="#d4d6da"/><rect x="0" y="8" width="2" height="2" fill="#a9adb3"/><rect x="0" y="8" width="1" height="1" fill="#d4d6da"/><rect x="0" y="12" width="2" height="2" fill="#a9adb3"/><rect x="0" y="12" width="1" height="1" fill="#d4d6da"/><rect x="0" y="16" width="2" height="2" fill="#a9adb3"/><rect x="0" y="16" width="1" height="1" fill="#d4d6da"/><rect x="0" y="20" width="2" height="2" fill="#a9adb3"/><rect x="0" y="20" width="1" height="1" fill="#d4d6da"/></svg>
<div class="t" style="left:187px;top:92.27px;font-size:11.5px;">Действия</div>
<svg class="a" style="left:243px;top:96px" width="5" height="4" viewBox="0 0 5 4"><path d="M0 0 L5 0 L2.5 3 Z" fill="#000"/></svg>
<div class="a" style="left:256px;top:88px;width:1px;height:20px;background:#6f6f6f"></div>
<svg class="a" style="left:262px;top:89px" width="17" height="17" viewBox="0 0 17 17"><circle cx="8.8" cy="8.8" r="7.4" fill="#fff" stroke="#5a86cc" stroke-width="1.1"/><circle cx="8.8" cy="8.8" r="6.2" fill="none" stroke="#a8ccf4" stroke-width="1.2"/><path d="M8.8 8.8 L12.8 4.2" stroke="#7c88d8" stroke-width="1"/><path d="M8.8 8.8 L11.5 13.3" stroke="#f4a080" stroke-width="1"/><path d="M8.8 8.8 L5 10.3" stroke="#6c78cc" stroke-width="1.1"/><circle cx="8.8" cy="8.2" r="0.9" fill="#f49070"/></svg>
<svg class="a" style="left:1006px;top:103px" width="5" height="4" viewBox="0 0 5 4"><path d="M0 0 L5 0 L2.5 3 Z" fill="#000"/></svg>
<div class="a" style="left:172px;top:112px;width:844px;height:176px;background:#fff;border:1px solid #a0a0a0;border-top:1px solid #7a7e86;border-left:1px solid #7a7e86"></div>
<div class="a" style="left:173px;top:113px;width:842px;height:35px;background:#a0a0a0"></div>
<div class="t" style="left:180px;top:125.93px;font-size:11.3px;color:#ececec">Перетащите сюда заголовок колонки, чтобы сгруппировать по ней</div>
<div class="a" style="left:173px;top:148px;width:661px;height:32px;background:#fafafa;border-bottom:1px solid #dde9f7"></div>
<div class="a" style="left:184px;top:148px;width:1px;height:31px;background:#e3eefa"></div>
<div class="a" style="left:259px;top:148px;width:1px;height:31px;background:#e3eefa"></div>
<div class="t" style="left:187px;top:152.69px;font-size:11px;">Код</div>
<svg class="a" style="left:246px;top:160px" width="8" height="8" viewBox="0 0 8 8"><path d="M3.5 0.5 L7 7 H0 Z" fill="#fff" stroke="#a8a8a8" stroke-width="0.9"/></svg>
<div class="t" style="left:262px;top:152.69px;font-size:11px;">Начало</div>
<div class="t" style="left:262px;top:165.69px;font-size:11px;">периода</div>
<div class="a" style="left:173px;top:180px;width:11px;height:19px;background:#f0f0f0;border-bottom:1px solid #a0a0a0;border-top:1px solid #fff;border-left:1px solid #fff"></div>
<svg class="a" style="left:177px;top:185px" width="6" height="9" viewBox="0 0 6 9"><path d="M0 0 L5.2 4.5 L0 9 Z" fill="#000"/></svg>
<div class="a" style="left:184px;top:180px;width:650px;height:19px;border-bottom:1px solid #a0a0a0;border-right:1px solid #a0a0a0;border-left:1px solid #a0a0a0"></div>
<div class="a" style="left:259px;top:180px;width:1px;height:18px;background:#a0a0a0"></div>
<div class="t" style="right:767px;top:184.69px;font-size:11px;">2</div>
<div class="t" style="left:262px;top:184.69px;font-size:11px;">26.07.2016</div>
<div class="a" style="left:173px;top:263px;width:661px;height:24px;background:#f0f0f0;border-top:2px solid #a0a0a0;border-right:1px solid #a0a0a0"></div>
<div class="a" style="left:184px;top:265px;width:1px;height:22px;background:#d8d8d8"></div>
<div class="a" style="left:187px;top:266px;width:72px;height:19px;background:#e6e8ea;border:1px solid #d6d8da"></div>
<div class="t" style="right:768px;top:271.69px;font-size:11px;">1</div>
<div class="a" style="left:172px;top:288px;width:844px;height:9px;background:#f0f0f0"></div>
<div class="a" style="left:172px;top:296px;width:844px;height:35px;background:#fff;border-top:1px solid #a0a0a0;border-bottom:1px solid #a0a0a0;border-right:1px solid #a0a0a0;border-left:1px solid #a0a0a0"></div>
<div class="t" style="left:175px;top:300.69px;font-size:11px;letter-spacing:0.2px;color:#808080">Нажмите здесь для изменения</div>
<div class="a" style="left:998px;top:298px;width:16px;height:31px;background:#f0f0f0"></div>
<svg class="a" style="left:1001px;top:302px" width="11" height="24" viewBox="0 0 11 24"><path d="M1.8 6.8 L5.5 3 L9.2 6.8" fill="none" stroke="#b4b4b4" stroke-width="2.1"/><path d="M1.8 17.2 L5.5 21 L9.2 17.2" fill="none" stroke="#b4b4b4" stroke-width="2.1"/></svg>
<div class="a" style="left:172px;top:331px;width:844px;height:182px;background:#f0f0f0;border-left:1px solid #a8a8a8;border-bottom:1px solid #b8b8b8"></div>
<div class="a" style="left:173px;top:331px;width:180px;height:25px;background:#fff"></div>
<div class="a" style="left:353px;top:352px;width:661px;height:160px;background:#fff;border-top:1px solid #a8a8a8;border-right:1px solid #a8a8a8"></div>
<div class="a" style="left:173px;top:356px;width:180px;height:155px;background:#fff"></div>
<svg class="a" style="left:181px;top:334px" width="14" height="16" viewBox="0 0 14 16"><rect x="0" y="0" width="13" height="15" rx="1" fill="#4a80cc"/><rect x="2" y="1" width="9" height="1" fill="#ffffff"/><rect x="1" y="2" width="10" height="12" fill="url(#gBook)"/><rect x="1.5" y="2.5" width="9" height="11" fill="none" stroke="#eef4fb" stroke-opacity="0.7"/><rect x="3" y="5" width="6" height="1" fill="#ffffff"/><rect x="11" y="1" width="1" height="13" fill="#8fb3e2"/></svg>
<div class="t" style="left:202px;top:336.69px;font-size:11px;">Состав инвентаризации</div>
<div class="a" style="left:176px;top:356px;width:836px;height:153px;background:#fff;border:1px solid #7a7e86"></div>
<div class="a" style="left:177px;top:357px;width:834px;height:35px;background:#a0a0a0"></div>
<div class="t" style="left:184px;top:369.63px;font-size:11.3px;color:#ececec">Перетащите сюда заголовок колонки, чтобы сгруппировать по ней</div>
<div class="a" style="left:177px;top:392px;width:432px;height:32px;background:#fafafa;border-bottom:1px solid #dde9f7"></div>
<div class="a" style="left:188px;top:392px;width:1px;height:31px;background:#e3eefa"></div>
<div class="a" style="left:263px;top:392px;width:1px;height:31px;background:#e3eefa"></div>
<div class="a" style="left:383px;top:392px;width:1px;height:31px;background:#e3eefa"></div>
<div class="a" style="left:458px;top:392px;width:1px;height:31px;background:#e3eefa"></div>
<div class="a" style="left:533px;top:392px;width:1px;height:31px;background:#e3eefa"></div>
<div class="t" style="left:191px;top:396.69px;font-size:11px;">Код</div>
<svg class="a" style="left:250px;top:404px" width="8" height="8" viewBox="0 0 8 8"><path d="M3.5 0.5 L7 7 H0 Z" fill="#fff" stroke="#a8a8a8" stroke-width="0.9"/></svg>
<div class="t" style="left:267px;top:396.69px;font-size:11px;">Наименование</div>
<div class="t" style="left:387px;top:408.69px;font-size:11px;">План</div>
<div class="t" style="left:462px;top:408.69px;font-size:11px;">Факт</div>
<div class="t" style="left:537px;top:408.69px;font-size:11px;">Разница</div>
<div class="a" style="left:177px;top:424px;width:11px;height:31px;background:#f0f0f0;border-bottom:1px solid #a0a0a0"></div>
<svg class="a" style="left:181px;top:435px" width="6" height="9" viewBox="0 0 6 9"><path d="M0 0 L5.2 4.5 L0 9 Z" fill="#000"/></svg>
<div class="a" style="left:188px;top:424px;width:421px;height:31px;border-bottom:1px solid #a0a0a0;border-right:1px solid #a0a0a0;border-left:1px solid #a0a0a0"></div>
<div class="a" style="left:263px;top:424px;width:1px;height:30px;background:#a0a0a0"></div>
<div class="a" style="left:383px;top:424px;width:1px;height:30px;background:#a0a0a0"></div>
<div class="a" style="left:458px;top:424px;width:1px;height:30px;background:#a0a0a0"></div>
<div class="a" style="left:533px;top:424px;width:1px;height:30px;background:#a0a0a0"></div>
<div class="t" style="right:763px;top:427.69px;font-size:11px;">1</div>
<div class="t" style="left:266px;top:427.69px;font-size:11px;">10002 Тестовый</div>
<div class="t" style="left:266px;top:440.69px;font-size:11px;">товар, шт</div>
<div class="t" style="right:569px;top:427.69px;font-size:11px;">100.000</div>
<div class="t" style="right:419px;top:427.69px;font-size:11px;">0.000</div>
<div class="a" style="left:177px;top:484px;width:432px;height:24px;background:#f0f0f0;border-top:2px solid #a0a0a0;border-right:1px solid #a0a0a0;border-bottom:1px solid #b0b0b0"></div>
<div class="a" style="left:188px;top:486px;width:1px;height:21px;background:#d8d8d8"></div>
<div class="a" style="left:191px;top:487px;width:72px;height:19px;background:#e6e8ea;border:1px solid #d6d8da"></div>
<div class="a" style="left:385px;top:487px;width:73px;height:19px;background:#e6e8ea;border:1px solid #d6d8da"></div>
<div class="a" style="left:460px;top:487px;width:72px;height:19px;background:#e6e8ea;border:1px solid #d6d8da"></div>
<div class="a" style="left:535px;top:487px;width:72px;height:19px;background:#e6e8ea;border:1px solid #d6d8da"></div>
<div class="t" style="right:764px;top:491.69px;font-size:11px;">1</div>
<div class="t" style="right:569px;top:491.69px;font-size:11px;">100.000</div>
<div class="t" style="right:495px;top:491.69px;font-size:11px;">0.000</div>
<div class="t" style="right:420px;top:491.69px;font-size:11px;">0.000</div>
<div class="a" style="left:7px;top:513px;width:1009px;height:6px;background:#fff;border-top:1px solid #a8a8a8"></div>
<div class="a" style="left:7px;top:519px;width:1009px;height:20px;background:#ababab"></div>
<div class="a" style="left:8px;top:514px;width:121px;height:25px;background:#fff"></div>
<svg class="a" style="left:17px;top:523px" width="14" height="16" viewBox="0 0 14 16"><rect x="0" y="0" width="13" height="15" rx="1" fill="#4a80cc"/><rect x="2" y="1" width="9" height="1" fill="#ffffff"/><rect x="1" y="2" width="10" height="12" fill="url(#gBook)"/><rect x="1.5" y="2.5" width="9" height="11" fill="none" stroke="#eef4fb" stroke-opacity="0.7"/><rect x="3" y="5" width="6" height="1" fill="#ffffff"/><rect x="11" y="1" width="1" height="13" fill="#8fb3e2"/></svg>
<div class="t" style="left:38px;top:524.69px;font-size:11px;">Инвентаризация</div>
<div class="a" style="left:7px;top:539px;width:1009px;height:21px;background:#f0f0f0;border-top:1px solid #dcdcdc"></div>
<svg class="a" style="left:11px;top:543px" width="14" height="16" viewBox="0 0 14 16"><ellipse cx="7" cy="13" rx="6" ry="2" fill="#000" opacity="0.3"/><circle cx="7" cy="7" r="6" fill="url(#gBlueBall)" stroke="#2a5aa8" stroke-width="0.6"/><rect x="5.8" y="3.2" width="2.4" height="2" fill="#fff"/><rect x="5.8" y="6.2" width="2.4" height="4.5" fill="#fff"/></svg>
<div class="t" style="left:33px;top:545.69px;font-size:11px;letter-spacing:0.15px;">2.0.520.10</div>
<div class="a" style="left:95px;top:542px;width:1px;height:16px;background:#d0d0d0"></div>
<svg class="a" style="left:96px;top:542px" width="19" height="17" viewBox="0 0 19 17"><path d="M2.5 2.5 L4 1 H9 L11 2.5 V14.5 L9.5 16 H4 L2.5 14.5 Z" fill="#e8e8ec" stroke="#555" stroke-width="1"/><path d="M5.5 3.5 V14.5 M7.5 3.5 V14.5" stroke="#a0a0a0" stroke-width="1"/><rect x="5" y="13" width="2" height="1.5" fill="#3cb83c"/><rect x="10.5" y="7.5" width="7" height="6" fill="#34a8f4" stroke="#444" stroke-width="1"/><rect x="12" y="9" width="3" height="1.5" fill="#bfe8ff"/><ellipse cx="14" cy="15.5" rx="2.8" ry="1.2" fill="#aaa" stroke="#555" stroke-width="0.7"/></svg>
<div class="t" style="left:120px;top:545.69px;font-size:11px;">localhost</div>
<div class="a" style="left:171px;top:542px;width:1px;height:16px;background:#d0d0d0"></div>
<svg class="a" style="left:174px;top:542px" width="15" height="17" viewBox="0 0 15 17"><path d="M0.8 16 V13.5 Q0.8 10.8 4 10.3 L7.5 11.5 L11 10.3 Q14.2 10.8 14.2 13.5 V16 Z" fill="#e4e6f4" stroke="#4a4ea0" stroke-width="1.1" stroke-linejoin="round"/><ellipse cx="7.5" cy="6" rx="3.3" ry="4" fill="#fde0b4"/><path d="M3.8 6.5 Q3 1.2 7.8 1.2 Q12 1.2 11.4 6 Q10.5 3.2 6.5 3.5 Q5 5 3.8 6.5 Z" fill="#b0701c"/></svg>
<div class="t" style="left:197px;top:545.69px;font-size:11px;letter-spacing:-0.6px;">SYSDBA (MAIN)</div>
<div class="a" style="left:280px;top:542px;width:1px;height:16px;background:#d0d0d0"></div>
<svg class="a" style="left:283px;top:543px" width="15" height="16" viewBox="0 0 15 16"><rect x="0.5" y="1.5" width="14" height="13.5" fill="#e6b458" stroke="#999" stroke-width="1"/><rect x="1" y="2" width="13" height="4" fill="#34c034"/><rect x="1" y="6" width="13" height="1" fill="#e8e8e8"/><g fill="#fff"><rect x="2.5" y="8" width="1.2" height="1.2"/><rect x="4.5" y="8" width="1.2" height="1.2"/><rect x="6.5" y="8" width="1.2" height="1.2"/><rect x="8.5" y="8" width="1.2" height="1.2"/><rect x="10.5" y="8" width="1.2" height="1.2"/><rect x="2.5" y="10.3" width="1.2" height="1.2"/><rect x="4.5" y="10.3" width="1.2" height="1.2"/><rect x="6.5" y="10.3" width="1.2" height="1.2"/><rect x="2.5" y="12.5" width="1.2" height="1.2"/><rect x="4.5" y="12.5" width="1.2" height="1.2"/><rect x="6.5" y="12.5" width="1.2" height="1.2"/><rect x="8.5" y="12.5" width="1.2" height="1.2"/><rect x="10.5" y="12.5" width="1.2" height="1.2"/></g><rect x="8.3" y="9.3" width="3.4" height="3.4" fill="#1a70e0"/><rect x="9.5" y="10.5" width="1" height="1" fill="#fff"/><path d="M2.8 0.5 V4 M11.7 0.5 V4" stroke="#555" stroke-width="1.3"/></svg>
<div class="t" style="left:306px;top:545.69px;font-size:11px;">27.07.2016</div>
<div class="a" style="left:370px;top:542px;width:1px;height:16px;background:#d0d0d0"></div>
<div class="t" style="left:382px;top:545.69px;font-size:11px;">00:00:00:110</div>
<div class="a" style="left:460px;top:542px;width:1px;height:16px;background:#d0d0d0"></div>
<div class="t" style="left:463px;top:545.35px;font-size:11.4px;">Отразить на остатках</div>
<svg class="a" style="left:1004px;top:547px" width="9" height="9" viewBox="0 0 9 9"><rect x="6" y="0" width="2" height="2" fill="#a0a0a0"/><rect x="3" y="3" width="2" height="2" fill="#a0a0a0"/><rect x="6" y="3" width="2" height="2" fill="#a0a0a0"/><rect x="0" y="6" width="2" height="2" fill="#a0a0a0"/><rect x="3" y="6" width="2" height="2" fill="#a0a0a0"/><rect x="6" y="6" width="2" height="2" fill="#a0a0a0"/></svg>
<div class="a" style="left:7px;top:30px;width:1010px;height:531px;border:1px solid #92afd0"></div>
<div class="a" style="left:297px;top:144px;width:478px;height:272px;background:#afcbe9;border:1px solid #8aa5c3"></div>
<div class="t" style="left:477px;top:151.81px;font-size:15.7px;letter-spacing:-0.3px;color:#2e3338">Инвентаризация</div>
<div class="a" style="left:737px;top:145px;width:31px;height:20px;background:#c75050"></div>
<svg class="a" style="left:748px;top:151px" width="10" height="9" viewBox="0 0 10 9"><path d="M1.5 1.2 L8.5 7.8 M8.5 1.2 L1.5 7.8" stroke="#fff" stroke-width="1.9"/></svg>
<div class="a" style="left:304px;top:174px;width:464px;height:235px;background:#f0f0f0;border:1px solid #9fb3c8"></div>
<div class="a" style="left:313px;top:190px;width:445px;height:179px;border:1px solid #d8d8d8"></div>
<div class="a" style="left:320px;top:185px;width:30px;height:10px;background:#f0f0f0"></div>
<div class="t" style="left:321px;top:185.69px;font-size:11px;">Товар</div>
<div class="t" style="left:330px;top:211.52px;font-size:11.2px;">Поиск по штрих-коду (F8)</div>
<div class="a" style="left:329px;top:232px;width:233px;height:31px;background:#fff;border:1px solid #a6a6a6"></div>
<div class="t" style="left:333px;top:238.09px;font-size:19.5px;letter-spacing:-1.3px;-webkit-text-stroke:0.35px #000">10002</div>
<div class="t" style="left:578px;top:229.69px;font-size:11px;">Добавить</div>
<div class="t" style="left:578px;top:242.69px;font-size:11px;letter-spacing:0.1px;">количество</div>
<div class="t" style="left:578px;top:254.69px;font-size:11px;">(F7)</div>
<div class="a" style="left:657px;top:232px;width:84px;height:31px;background:#fff;border:1px solid #a6a6a6"></div>
<div class="t" style="left:660px;top:238.09px;font-size:19.5px;letter-spacing:-0.9px;-webkit-text-stroke:0.35px #000">99</div>
<div class="a" style="left:680px;top:235px;width:1px;height:22px;background:#000"></div>
<div class="a" style="left:724px;top:234px;width:15px;height:13px;background:linear-gradient(#f4f4f4,#e0e0e0);border:1px solid #b0b0b0"></div>
<div class="a" style="left:724px;top:248px;width:15px;height:13px;background:linear-gradient(#f4f4f4,#e0e0e0);border:1px solid #b0b0b0"></div>
<svg class="a" style="left:729px;top:239px" width="5" height="3" viewBox="0 0 5 3"><path d="M0 3 H5 L2.5 0 Z" fill="#000"/></svg>
<svg class="a" style="left:729px;top:253px" width="5" height="3" viewBox="0 0 5 3"><path d="M0 0 H5 L2.5 3 Z" fill="#000"/></svg>
<div class="t" style="left:330px;top:291.69px;font-size:11px;letter-spacing:0.1px;">Штрих-код</div>
<div class="t" style="left:435px;top:291.69px;font-size:11px;letter-spacing:0.9px;font-weight:bold">10002</div>
<div class="t" style="left:330px;top:307.69px;font-size:11px;letter-spacing:-0.3px;">Наименование</div>
<div class="t" style="left:435px;top:307.69px;font-size:11px;letter-spacing:0.4px;font-weight:bold">Тестовый товар, шт</div>
<div class="t" style="left:330px;top:323.69px;font-size:11px;letter-spacing:0.1px;">Кол-во. План</div>
<div class="t" style="left:435px;top:323.69px;font-size:11px;letter-spacing:0.7px;font-weight:bold">100.000</div>
<div class="t" style="left:330px;top:339.69px;font-size:11px;letter-spacing:0.1px;">Кол-во. Факт</div>
<div class="t" style="left:435px;top:339.69px;font-size:11px;letter-spacing:0.7px;font-weight:bold">99.000</div>
<div class="a" style="left:685px;top:376px;width:73px;height:23px;background:linear-gradient(#f2f2f2,#e2e2e2);border:1px solid #acacac"></div>
<div class="t" style="left:702px;top:381.69px;font-size:11px;letter-spacing:-0.3px;">Отмена</div>
</body></html>
